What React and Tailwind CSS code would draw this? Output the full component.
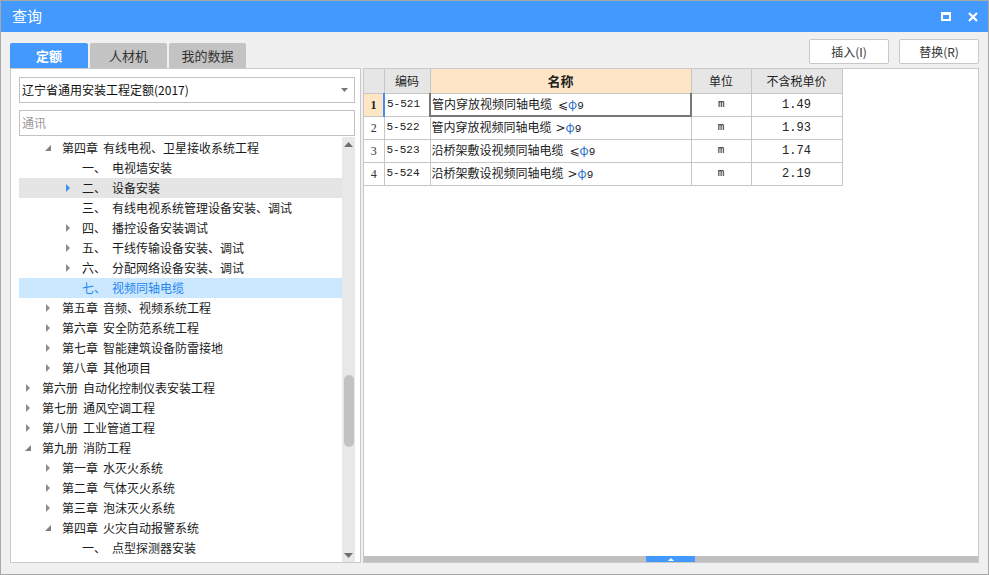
import React from "react";

const FONT = { fontFamily: '"Noto Sans CJK SC", "Liberation Sans", sans-serif' };

function Arrow({ type }) {
  if (type === "open")
    return (
      <svg width="8" height="8" viewBox="0 0 8 8" className="shrink-0">
        <polygon points="7,1 7,7 1,7" fill="#808080" />
      </svg>
    );
  if (type === "closed")
    return (
      <svg width="8" height="8" viewBox="0 0 8 8" className="shrink-0">
        <polygon points="2,0 6,4 2,8" fill="#8c8c8c" />
      </svg>
    );
  if (type === "blue")
    return (
      <svg width="8" height="8" viewBox="0 0 8 8" className="shrink-0">
        <polygon points="2,0 6,4 2,8" fill="#3d8ff5" />
      </svg>
    );
  return <span className="w-[8px] shrink-0" />;
}

const tree = [
  { lvl: 2, a: "open", t: "第四章", n: "有线电视、卫星接收系统工程" },
  { lvl: 3, a: "", t: "一、", n: "电视墙安装" },
  { lvl: 3, a: "blue", t: "二、", n: "设备安装", hover: true },
  { lvl: 3, a: "", t: "三、", n: "有线电视系统管理设备安装、调试" },
  { lvl: 3, a: "closed", t: "四、", n: "播控设备安装调试" },
  { lvl: 3, a: "closed", t: "五、", n: "干线传输设备安装、调试" },
  { lvl: 3, a: "closed", t: "六、", n: "分配网络设备安装、调试" },
  { lvl: 3, a: "", t: "七、", n: "视频同轴电缆", sel: true },
  { lvl: 2, a: "closed", t: "第五章", n: "音频、视频系统工程" },
  { lvl: 2, a: "closed", t: "第六章", n: "安全防范系统工程" },
  { lvl: 2, a: "closed", t: "第七章", n: "智能建筑设备防雷接地" },
  { lvl: 2, a: "closed", t: "第八章", n: "其他项目" },
  { lvl: 1, a: "closed", t: "第六册", n: "自动化控制仪表安装工程" },
  { lvl: 1, a: "closed", t: "第七册", n: "通风空调工程" },
  { lvl: 1, a: "closed", t: "第八册", n: "工业管道工程" },
  { lvl: 1, a: "open", t: "第九册", n: "消防工程" },
  { lvl: 2, a: "closed", t: "第一章", n: "水灭火系统" },
  { lvl: 2, a: "closed", t: "第二章", n: "气体灭火系统" },
  { lvl: 2, a: "closed", t: "第三章", n: "泡沫灭火系统" },
  { lvl: 2, a: "open", t: "第四章", n: "火灾自动报警系统" },
  { lvl: 3, a: "", t: "一、", n: "点型探测器安装" },
];

const rows = [
  { no: "1", code: "5-521", name: "管内穿放视频同轴电缆", sym: "⩽", unit: "m", price: "1.49" },
  { no: "2", code: "5-522", name: "管内穿放视频同轴电缆", sym: ">", unit: "m", price: "1.93" },
  { no: "3", code: "5-523", name: "沿桥架敷设视频同轴电缆", sym: "⩽", unit: "m", price: "1.74" },
  { no: "4", code: "5-524", name: "沿桥架敷设视频同轴电缆", sym: ">", unit: "m", price: "2.19" },
];

const MONO = { fontFamily: '"Liberation Mono", monospace', fontSize: 11 };

export default function App() {
  return (
    <div style={FONT} className="w-[989px] h-[575px] bg-[#f0f0f0] border border-[#a8a8a8] flex flex-col overflow-hidden text-[12px] text-[#222]">
      {/* Title bar */}
      <div className="h-[31px] bg-[#4499ff] flex items-center justify-between pl-[11px] pr-[10px] shrink-0">
        <span className="text-white text-[15px]">查询</span>
        <div className="flex items-center gap-[17px]">
          <div className="w-[10px] h-[9px] border-2 border-white border-t-[3px]" />
          <svg width="10" height="10" viewBox="0 0 10 10">
            <path d="M1 1 L9 9 M9 1 L1 9" stroke="white" strokeWidth="2.2" />
          </svg>
        </div>
      </div>

      <div className="flex-1 flex flex-col px-[9px] pt-[7px] pb-[11px] min-h-0">
        {/* Tabs row & buttons */}
        <div className="flex items-end justify-between h-[29px] shrink-0">
          <div className="flex items-end gap-[2px] mt-auto">
            <div className="w-[78px] h-[25px] bg-[#4499ff] rounded-t-[2px] text-white font-bold text-[13px] flex items-center justify-center">定额</div>
            <div className="w-[77px] h-[25px] bg-[#c3c3c3] rounded-t-[2px] text-[#333] text-[13px] flex items-center justify-center">人材机</div>
            <div className="w-[77px] h-[25px] bg-[#c3c3c3] rounded-t-[2px] text-[#333] text-[13px] flex items-center justify-center">我的数据</div>
          </div>
          <div className="flex gap-[10px] self-start">
            <button className="w-[80px] h-[25px] bg-white border border-[#c8c8c8] rounded-[2px] text-[12px] text-[#333]">插入(I)</button>
            <button className="w-[80px] h-[25px] bg-white border border-[#c8c8c8] rounded-[2px] text-[12px] text-[#333]">替换(R)</button>
          </div>
        </div>

        <div className="flex-1 flex gap-[2px] min-h-0">
          {/* Left panel */}
          <div className="w-[351px] bg-white border border-[#c9c9c9] flex flex-col pt-[8px] pl-[8px] pr-[5px] min-h-0">
            <div className="h-[26px] border border-[#c2c2c2] flex items-center justify-between pl-[2px] pr-[6px] shrink-0">
              <span className="text-[12px] text-[#111]">辽宁省通用安装工程定额(2017)</span>
              <svg width="7" height="4" viewBox="0 0 7 4"><polygon points="0,0 7,0 3.5,4" fill="#777" /></svg>
            </div>
            <div className="h-[26px] mt-[7px] border border-[#c2c2c2] flex items-center pl-[2px] shrink-0">
              <span className="text-[12px] text-[#999]">通讯</span>
            </div>
            <div className="flex-1 flex min-h-0 mt-[1px]">
              <div className="flex-1 flex flex-col pt-[1px] overflow-hidden">
                {tree.map((r, i) => {
                  const pad = r.lvl === 1 ? 5 : r.lvl === 2 ? 25 : 45;
                  return (
                    <div
                      key={i}
                      className={`h-[20px] shrink-0 flex items-center ${r.hover ? "bg-[#e5e5e5]" : ""} ${r.sel ? "bg-[#cce8ff] text-[#1e84f0]" : "text-[#1a1a1a]"}`}
                      style={{ paddingLeft: pad }}
                    >
                      <Arrow type={r.a} />
                      <span className="ml-[10px] whitespace-pre">
                        {r.lvl === 3 ? (
                          <>
                            <span className="inline-block w-[30px]">{r.t}</span>
                            {r.n}
                          </>
                        ) : (
                          <>
                            {r.t}
                            <span className="ml-[5px]">{r.n}</span>
                          </>
                        )}
                      </span>
                    </div>
                  );
                })}
              </div>
              {/* Scrollbar */}
              <div className="w-[13px] bg-[#e8e8e8] flex flex-col items-center shrink-0">
                <div className="h-[14px] flex items-center justify-center">
                  <svg width="9" height="5" viewBox="0 0 9 5"><polygon points="0,5 9,5 4.5,0" fill="#707070" /></svg>
                </div>
                <div className="h-[224px]" />
                <div className="w-[10px] h-[72px] bg-[#c2c2c2] rounded-[5px]" />
                <div className="flex-1" />
                <div className="h-[14px] flex items-center justify-center">
                  <svg width="9" height="5" viewBox="0 0 9 5"><polygon points="0,0 9,0 4.5,5" fill="#707070" /></svg>
                </div>
              </div>
            </div>
          </div>

          {/* Right panel */}
          <div className="flex-1 bg-white border border-[#c9c9c9] flex flex-col min-h-0">
            <div className="flex-1 min-h-0">
              <table className="border-collapse text-[12px]" style={{ tableLayout: "fixed" }}>
                <colgroup>
                  <col style={{ width: 20 }} />
                  <col style={{ width: 46 }} />
                  <col style={{ width: 261 }} />
                  <col style={{ width: 60 }} />
                  <col style={{ width: 91 }} />
                </colgroup>
                <thead>
                  <tr className="h-[24px]">
                    <th className="bg-[#e6e6e6] border border-[#c6c6c6] border-t-0 border-l-0"></th>
                    <th className="bg-[#e6e6e6] border border-[#c6c6c6] border-t-0 font-normal text-[#222]">编码</th>
                    <th className="bg-[#fde5c6] border border-[#c6c6c6] border-t-0 font-bold text-[13px] text-[#222]">名称</th>
                    <th className="bg-[#e6e6e6] border border-[#c6c6c6] border-t-0 font-normal text-[#222]">单位</th>
                    <th className="bg-[#e6e6e6] border border-[#c6c6c6] border-t-0 font-normal text-[#222]">不含税单价</th>
                  </tr>
                </thead>
                <tbody>
                  {rows.map((r, i) => (
                    <tr key={i} className="h-[23px]">
                      <td className={`border border-[#c6c6c6] border-l-0 text-center ${i === 0 ? "bg-[#fde5c6] font-bold text-[#222]" : "text-[#333]"}`} style={{ fontFamily: '"Liberation Serif", serif' }}>{r.no}</td>
                      <td className={`border border-[#c6c6c6] pl-[2px] ${i === 0 ? "border-l-2 border-l-[#3d8ff5] border-t-[#3d8ff5]" : ""}`} style={MONO}>{r.code}</td>
                      <td className={`pl-[1px] whitespace-nowrap ${i === 0 ? "border-2 border-[#777] border-t-[#3d8ff5] border-t-1" : "border border-[#c6c6c6]"}`}>
                        {r.name}
                        <span className={r.sym === ">" ? "ml-[4px]" : "ml-[6px]"} style={{ fontFamily: '"DejaVu Sans", sans-serif', fontSize: 12 }}>{r.sym}</span>
                        <span className="text-[#1f6fcf]">φ</span>
                        <span style={MONO}>9</span>
                      </td>
                      <td className="border border-[#c6c6c6] text-center text-[#111]" style={MONO}>{r.unit}</td>
                      <td className="border border-[#c6c6c6] text-center" style={{ fontFamily: '"Liberation Mono", monospace', fontSize: 12 }}>{r.price}</td>
                    </tr>
                  ))}
                </tbody>
              </table>
            </div>
            <div className="h-[6px] bg-[#c0c0c0] shrink-0 flex">
              <div className="w-[282px]" />
              <div className="w-[49px] bg-[#4499ff] flex items-center justify-center">
                <svg width="6" height="3" viewBox="0 0 6 3"><polygon points="0,3 6,3 3,0" fill="white" /></svg>
              </div>
            </div>
          </div>
        </div>
      </div>
    </div>
  );
}
